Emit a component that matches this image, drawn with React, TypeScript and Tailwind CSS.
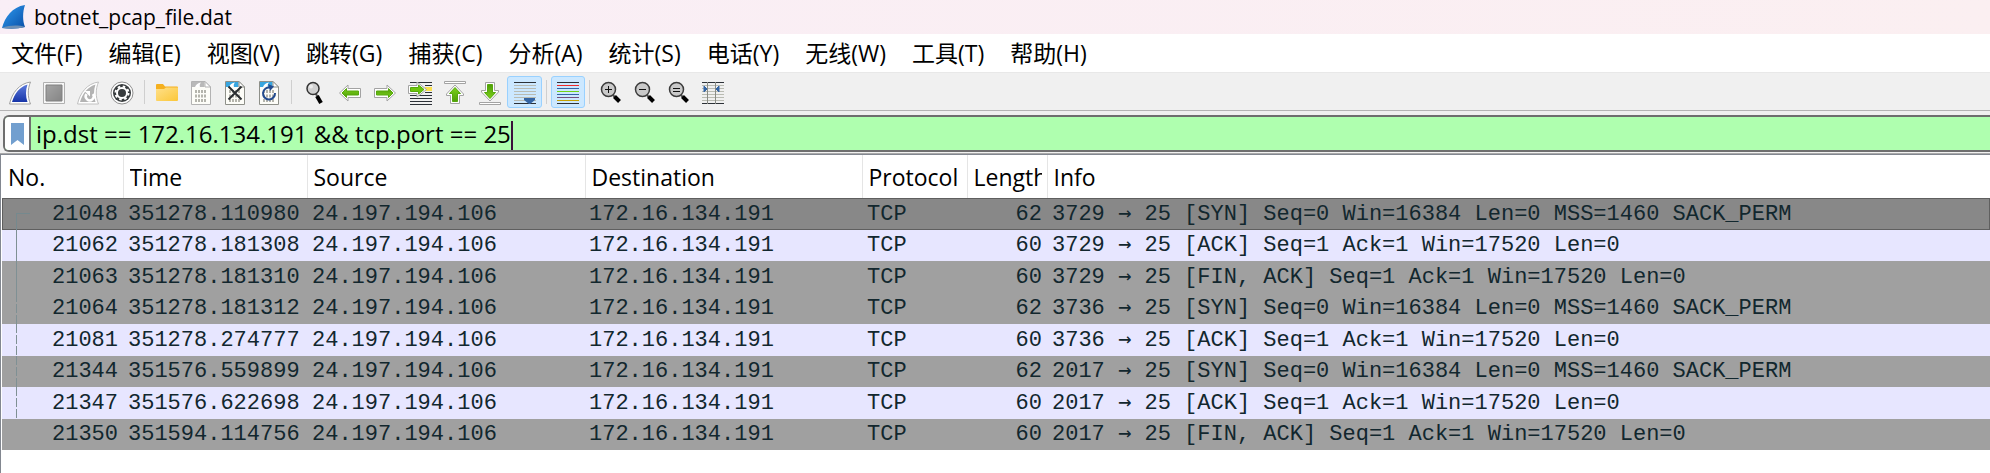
import { useState } from "react";
import type { ReactNode } from "react";

const menus = [
  "文件(F)",
  "编辑(E)",
  "视图(V)",
  "跳转(G)",
  "捕获(C)",
  "分析(A)",
  "统计(S)",
  "电话(Y)",
  "无线(W)",
  "工具(T)",
  "帮助(H)",
];

type Packet = {
  no: number;
  time: string;
  length: number;
  ports: [number, number];
  info: string;
  kind: "syn" | "ack" | "fin";
  link: "start" | "solid" | "dashed" | "none";
};

const SRC = "24.197.194.106";
const DST = "172.16.134.191";

const SYN = "[SYN] Seq=0 Win=16384 Len=0 MSS=1460 SACK_PERM";
const ACK = "[ACK] Seq=1 Ack=1 Win=17520 Len=0";
const FIN_ACK = "[FIN, ACK] Seq=1 Ack=1 Win=17520 Len=0";

const packets: Packet[] = [
  { no: 21048, time: "351278.110980", length: 62, ports: [3729, 25], info: SYN, kind: "syn", link: "start" },
  { no: 21062, time: "351278.181308", length: 60, ports: [3729, 25], info: ACK, kind: "ack", link: "solid" },
  { no: 21063, time: "351278.181310", length: 60, ports: [3729, 25], info: FIN_ACK, kind: "fin", link: "solid" },
  { no: 21064, time: "351278.181312", length: 62, ports: [3736, 25], info: SYN, kind: "syn", link: "dashed" },
  { no: 21081, time: "351278.274777", length: 60, ports: [3736, 25], info: ACK, kind: "ack", link: "dashed" },
  { no: 21344, time: "351576.559899", length: 62, ports: [2017, 25], info: SYN, kind: "syn", link: "dashed" },
  { no: 21347, time: "351576.622698", length: 60, ports: [2017, 25], info: ACK, kind: "ack", link: "dashed" },
  { no: 21350, time: "351594.114756", length: 60, ports: [2017, 25], info: FIN_ACK, kind: "fin", link: "none" },
];

const linkStyle = {
  start: "top-[15px] bottom-0 w-[14px] border-l border-t border-[#75898e]",
  solid: "inset-y-0 border-l border-[#7f9094]",
  dashed: "inset-y-0 w-px bg-[repeating-linear-gradient(to_bottom,#7f9094_0_9px,transparent_9px_11px)]",
  none: "hidden",
};

function Svg({ children }: { children: ReactNode }) {
  return (
    <svg width="24" height="24" viewBox="0 0 24 24" fill="none" className="shrink-0" aria-hidden="true">
      {children}
    </svg>
  );
}

const FIN = "M1.500 23 C4 12 11 2.500 22.500 1 C19.500 8 19.500 16 22.500 23 Z";
const FIN_INNER = "M4 21 C6.500 12.500 12 5.500 19.500 3.500 C17.500 9 17.500 15.500 19.500 21 Z";

function Arrow({ transform }: { transform?: string }) {
  return (
    <g transform={transform}>
      <path d="M1.500 12 L10 4 V7.500 H22.500 V16.500 H10 V20 Z" fill="#fff" stroke="#a3a3a3" strokeLinejoin="round" />
      <path d="M4 12 L8.500 7.500 V10 H20.500 V14 H8.500 V16.500 Z" fill="url(#green)" stroke="#56a80d" />
    </g>
  );
}

function UpArrow({ transform }: { transform?: string }) {
  return (
    <g transform={transform}>
      <path d="M1.500 .5 H22.500 V2.500 H1.500 Z" fill="#fff" stroke="#a3a3a3" />
      <path d="M12 4 L20.500 13 V14.500 H16.500 V22.500 H7.500 V14.500 H3.500 V13 Z" fill="#fff" stroke="#a3a3a3" strokeLinejoin="round" />
      <path d="M12 6.500 L17.500 12.500 H14.500 V20.500 H9.500 V12.500 H6.500 Z" fill="url(#green)" stroke="#56a80d" />
    </g>
  );
}

function Page({ top, edge }: { top: string; edge: string }) {
  return (
    <>
      <path d="M2.500 .5 H16 L21.500 6 V23.500 H2.500 Z" fill="#fdfdf8" stroke={edge} />
      <path d="M3 1 H15.500 V6 H3 Z" fill={top} />
      <path d="M6 6 C7 3.500 9 2 12 1.500 C10.500 3 10.500 4.500 11 6 Z" fill="#fff" />
      <path d="M16 .5 V6 H21.500 Z" fill="#fff" stroke={edge} />
      <g stroke="#b4b4ac" strokeWidth="3" strokeDasharray="2 1">
        <path d="M6 10.500 H18 M6 15 H18 M6 19.500 H18" />
      </g>
    </>
  );
}

function Lens() {
  return (
    <>
      <path d="M14 14 L16.500 17" stroke="#555" strokeWidth="2" />
      <path d="M15.500 15.500 L20.500 20.500" stroke="#000" strokeWidth="4" />
      <circle cx="9.500" cy="8.500" r="7" fill="#c9c9c9" stroke="#3c3c3c" strokeWidth="1.500" />
    </>
  );
}

const ruled = [4.5, 7.5, 10.5, 13.5, 16.5, 19.5].map((y) => (
  <path key={y} d={`M1 ${y} H23`} stroke="#b9bbb2" />
));

type Tool = { label: string; icon: ReactNode; on?: boolean };

const groups: Tool[][] = [
  [
    {
      label: "开始捕获",
      icon: (
        <>
          <path d={FIN} fill="#fff" stroke="#a0a0a0" />
          <path d={FIN_INNER} fill="url(#blue)" />
        </>
      ),
    },
    {
      label: "停止捕获",
      icon: (
        <>
          <path d="M1.500 1.500 H22.500 V22.500 H1.500 Z" fill="#f7f7f7" stroke="#b0b0b0" />
          <path d="M4 4 H20 V20 H4 Z" fill="url(#gray)" stroke="#808080" />
        </>
      ),
    },
    {
      label: "重新开始捕获",
      icon: (
        <>
          <path d={FIN} fill="#fff" stroke="#c0c0c0" />
          <path d={FIN_INNER} fill="#b3b3b3" />
          <path d="M10.500 13 A4 4 0 1 0 17 13" stroke="#fff" strokeWidth="2.500" />
          <path d="M8.500 10 H14 V15.500 Z" fill="#fff" />
        </>
      ),
    },
    {
      label: "捕获选项",
      icon: (
        <>
          <circle cx="12" cy="12" r="11" fill="#fff" stroke="#8f8f8f" />
          <circle cx="12" cy="12" r="9" fill="#383c3e" />
          <circle cx="12" cy="12" r="5" stroke="#fff" strokeWidth="2" />
          <circle cx="12" cy="12" r="6.500" stroke="#fff" strokeWidth="2" strokeDasharray="2.550 2.550" />
        </>
      ),
    },
  ],
  [
    {
      label: "打开",
      icon: (
        <>
          <path d="M1 4 Q1 3 2 3 H8 L10 5.500 H22 Q23 5.500 23 6.500 V10 H1 Z" fill="#f5b01f" />
          <path d="M1 8 H9 L11 6.500 H23 V19 Q23 20 22 20 H2 Q1 20 1 19 Z" fill="url(#folder)" />
        </>
      ),
    },
    { label: "保存", icon: <Page top="#b9b9b9" edge="#b3b3b3" /> },
    {
      label: "关闭",
      icon: (
        <>
          <Page top="#38a6e0" edge="#8e9089" />
          <path d="M5.500 5.500 L18.500 18.500 M18.500 5.500 L5.500 18.500" stroke="#2a2e31" strokeWidth="2" />
        </>
      ),
    },
    {
      label: "重新加载",
      icon: (
        <>
          <Page top="#38a6e0" edge="#8e9089" />
          <path d="M13 6.500 A6 6 0 1 0 18 12" stroke="#234b8e" strokeWidth="2" />
          <path d="M11 3 L17 5.500 L13 10 Z" fill="#234b8e" />
        </>
      ),
    },
  ],
  [
    {
      label: "查找",
      icon: (
        <>
          <path d="M12.500 12.500 L15 16" stroke="#555" strokeWidth="2" />
          <path d="M14 15 L18 22" stroke="#000" strokeWidth="4" />
          <circle cx="10" cy="7.500" r="6" fill="#d0d0d0" stroke="#333" strokeWidth="1.500" />
          <circle cx="8" cy="5.500" r="2" fill="#ececec" />
        </>
      ),
    },
    { label: "后退", icon: <Arrow /> },
    { label: "前进", icon: <Arrow transform="rotate(180 12 12)" /> },
    {
      label: "转到分组",
      icon: (
        <>
          <path d="M2 1.500 H24 M2 17.500 H24 M2 20.500 H24 M2 23.500 H24 M2 14.500 H24 M17 4.500 H24 M17 11.500 H24" stroke="#2c3137" />
          <path d="M17 6 H24 V10 H17 Z" fill="#fce14e" />
          <path d="M.5 4.500 H9 V1 L18.500 8.500 L9 16 V12.500 H.5 Z" fill="#fff" stroke="#a3a3a3" />
          <path d="M2.500 6.500 H10.500 V4 L16 8.500 L10.500 13 V10.500 H2.500 Z" fill="#6cc60c" stroke="#56a80d" />
        </>
      ),
    },
    { label: "首个分组", icon: <UpArrow /> },
    { label: "最新分组", icon: <UpArrow transform="rotate(180 12 12)" /> },
    {
      label: "自动滚动",
      on: true,
      icon: (
        <>
          <path d="M1 1.500 H23 M1 22.500 H23" stroke="#2c3137" />
          {ruled}
          <path d="M11 17 H22 V19 L17 23 H16 L11 19 Z" fill="#3465a4" />
        </>
      ),
    },
  ],
  [
    {
      label: "着色",
      on: true,
      icon: (
        <>
          <path d="M1 1.500 H23 M1 22.500 H23" stroke="#2c3137" />
          {["#ef2929", "#3465a4", "#73d216", "#3465a4", "#75507b", "#c4a000"].map((c, i) => (
            <path key={i} d={`M1 ${4.5 + i * 3} H23`} stroke={c} />
          ))}
        </>
      ),
    },
  ],
  [
    { label: "放大", icon: <><Lens /><path d="M6 8.500 H13 M9.500 5 V12" stroke="#111" /></> },
    { label: "缩小", icon: <><Lens /><path d="M6 8.500 H13" stroke="#111" /></> },
    { label: "普通大小", icon: <><Lens /><path d="M6 7.500 H13 M6 10.500 H13" stroke="#111" /></> },
    {
      label: "调整列宽",
      icon: (
        <>
          {ruled}
          <path d="M1 1.500 H23 M1 22.500 H23" stroke="#2c3137" />
          <path d="M6.500 1 V23 M14.500 1 V23" stroke="#8a8c86" />
          <path d="M3 5 L6 8 L3 11 Z M18 5 L15 8 L18 11 Z" fill="#3465a4" stroke="#3465a4" />
        </>
      ),
    },
  ],
];

export default function App() {
  const [filter, setFilter] = useState("ip.dst == 172.16.134.191 && tcp.port == 25");

  return (
    <div className="flex min-h-screen flex-col bg-white font-['Open_Sans','Noto_Sans_CJK_SC',sans-serif] text-[23px] text-black">
      <svg className="absolute h-0 w-0" aria-hidden="true">
        <defs>
          <linearGradient id="blue" x1="0" y1="0" x2="0" y2="1">
            <stop offset="0" stopColor="#5b79dc" />
            <stop offset="1" stopColor="#1735a8" />
          </linearGradient>
          <linearGradient id="logo" x1="0" y1="0" x2="1" y2="1">
            <stop offset="0" stopColor="#2f9cf0" />
            <stop offset="1" stopColor="#0a4fa8" />
          </linearGradient>
          <linearGradient id="gray" x1="0" y1="0" x2="1" y2="1">
            <stop offset="0" stopColor="#a5a5a5" />
            <stop offset="1" stopColor="#858585" />
          </linearGradient>
          <linearGradient id="green" x1="0" y1="0" x2="0" y2="1">
            <stop offset="0" stopColor="#7bd01a" />
            <stop offset="1" stopColor="#4f9d08" />
          </linearGradient>
          <linearGradient id="folder" x1="0" y1="0" x2="1" y2="1">
            <stop offset="0" stopColor="#ffe08a" />
            <stop offset="1" stopColor="#fbc739" />
          </linearGradient>
        </defs>
      </svg>

      <header className="flex h-[34px] items-center gap-2 bg-linear-to-r from-[#f9eef6] to-[#fbeff1] pl-[2px]">
        <Svg>
          <path d="M0 23 C3 12 10 2 23 0 C20.500 7 20.500 16 23 22 C15 24 8 24 0 23 Z" fill="url(#logo)" />
          <path d="M0 23 C8 20 16 20 23 22 C15 24 8 24 0 23 Z" fill="#6d8fb5" />
        </Svg>
        <h1 className="text-[21px] leading-[34px]">botnet_pcap_file.dat</h1>
      </header>

      <nav className="flex h-[38px] items-center gap-[26px] pl-[11px]">
        {menus.map((m) => (
          <button key={m} type="button" className="whitespace-nowrap leading-[38px]">
            {m}
          </button>
        ))}
      </nav>

      <div className="flex h-[39px] border-t border-b border-t-[#e8e8e8] border-b-[#b4b4b4] bg-[#f0f0f0] pt-[3px] pl-[3px]">
        {groups.map((tools, i) => (
          <div key={i} className="flex">
            {i > 0 && <span className={`mt-1 h-6 w-px bg-[#cfcfcf] ${i < 3 ? "mx-[5px]" : "mx-1"}`} />}
            {tools.map((t) => (
              <button
                key={t.label}
                type="button"
                aria-label={t.label}
                aria-pressed={t.on}
                className={`flex h-8 justify-center rounded-[3px] border pt-1 ${i === 2 ? "w-[35px]" : "w-[34px]"} ${
                  t.on ? "border-[#99d1ff] bg-[#cce8ff]" : "border-transparent"
                }`}
              >
                <Svg>{t.icon}</Svg>
              </button>
            ))}
          </div>
        ))}
      </div>

      <div className="border-b border-[#a9a9a9] bg-[#f0f0f0] pt-1 pb-px pl-[3px]">
        <div className="flex h-[37px] overflow-hidden rounded-l-md border-2 border-r-0 border-[#6e6e6e] bg-[#afffaf]">
          <button type="button" aria-label="书签" className="flex w-[26px] items-center justify-center border-r-2 border-[#6e6e6e] bg-white">
            <svg width="13" height="22" viewBox="0 0 13 22" aria-hidden="true">
              <path d="M0 0 H13 V22 L6.500 17 L0 22 Z" fill="#729fcf" />
            </svg>
          </button>
          <input
            aria-label="显示过滤器"
            value={filter}
            spellCheck={false}
            onChange={(e) => setFilter(e.target.value)}
            className="field-sizing-content bg-transparent pl-[5px] text-2xl outline-none"
          />
          <span className="mt-1 w-[2px] bg-[#3a123a]" />
        </div>
      </div>

      <main className="flex-1 border-t border-l border-[#828790] pl-px">
        <table className="w-full table-fixed border-collapse text-left">
          <colgroup>
            <col className="w-[121px]" />
            <col className="w-[184px]" />
            <col className="w-[278px]" />
            <col className="w-[277px]" />
            <col className="w-[105px]" />
            <col className="w-[80px]" />
            <col />
          </colgroup>
          <thead>
            <tr className="h-[43px]">
              {["No.", "Time", "Source", "Destination", "Protocol", "Length", "Info"].map((h) => (
                <th
                  key={h}
                  className="border-r border-[#e5e5e5] pr-[5px] pl-[6px] font-normal leading-[42px] last:border-r-0"
                >
                  <div className="overflow-hidden whitespace-nowrap">{h}</div>
                </th>
              ))}
            </tr>
          </thead>
          <tbody className="whitespace-nowrap font-['Liberation_Mono','DejaVu_Sans_Mono',monospace] text-[22px] leading-[31px] text-[#12272e]">
            {packets.map((p, i) => (
              <tr
                key={p.no}
                className={`odd:h-[32px] even:h-[31px] ${
                  i === 0
                    ? "bg-[#888888] outline outline-offset-[-1px] outline-[#5f5f5f]"
                    : p.kind === "ack"
                      ? "bg-[#e7e6ff]"
                      : "bg-[#a0a0a0]"
                }`}
              >
                <td className="relative p-0 pr-[5px] text-right">
                  <span className={`absolute left-[14px] ${linkStyle[p.link]}`} />
                  {p.no}
                </td>
                <td className="p-0 pl-[5px]">{p.time}</td>
                <td className="p-0 pl-[5px]">{SRC}</td>
                <td className="p-0 pl-[4px]">{DST}</td>
                <td className="p-0 pl-[5px]">TCP</td>
                <td className="p-0 pr-[5px] text-right">{p.length}</td>
                <td className="p-0 pl-[5px]">
                  {p.ports[0]} <span className="font-['DejaVu_Sans_Mono'] leading-none">→</span> {p.ports[1]} {p.info}
                </td>
              </tr>
            ))}
          </tbody>
        </table>
      </main>
    </div>
  );
}
